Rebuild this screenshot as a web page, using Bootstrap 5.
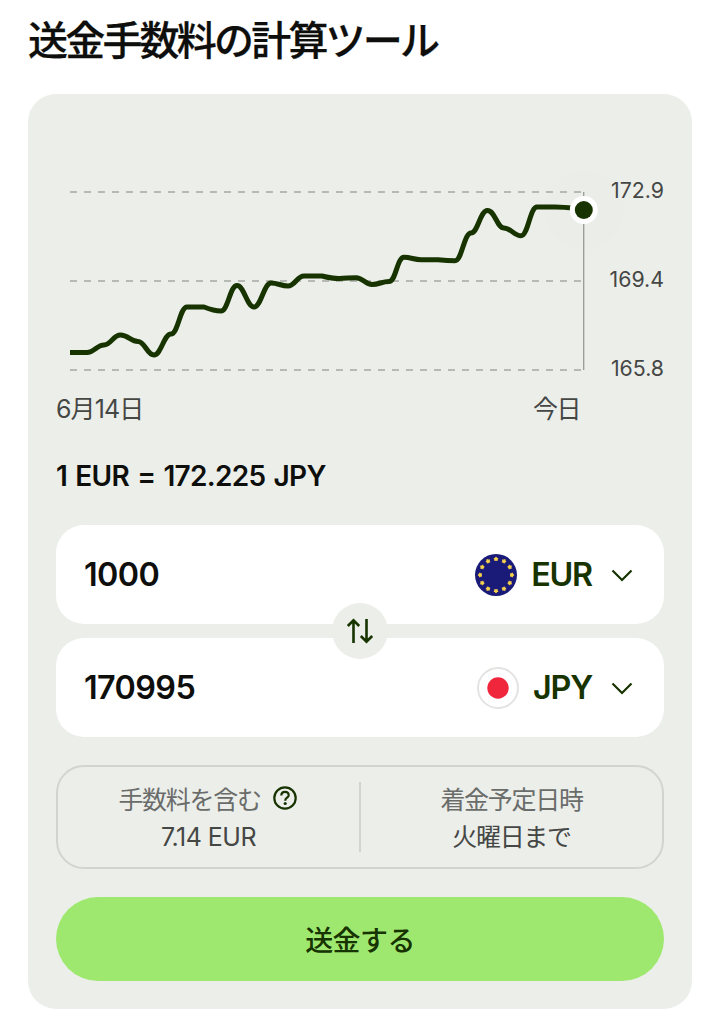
<!DOCTYPE html>
<html lang="ja">
<head>
<meta charset="utf-8">
<meta name="viewport" content="width=device-width, initial-scale=1">
<title>送金手数料の計算ツール</title>
<link href="https://cdn.jsdelivr.net/npm/bootstrap@5.3.0/dist/css/bootstrap.min.css" rel="stylesheet">
<style>
body{font-family:Inter,"Noto Sans CJK JP",sans-serif;color:#0e0f0c;background:#fff;padding:0 28px}
.page-title{font-size:40px;line-height:60px;height:94px;padding-top:11px;font-weight:500;letter-spacing:-2.8px;white-space:nowrap;-webkit-text-stroke:.25px #0e0f0c}
.calc{background:#eceeea;border-radius:28px;height:915px;padding:0 28px}
.chart{height:298px;margin:0 -28px}
.chart text{font-size:21.3px;fill:#454745}
.dates{font-size:25px;line-height:36px;height:36px;color:#454745;letter-spacing:-.9px;margin-top:-1px}
.dates span:last-child{margin-right:84px;letter-spacing:-1.5px}
.rate{font-size:28px;line-height:40px;margin-top:29px;font-weight:600;letter-spacing:-.7px;word-spacing:1.8px;white-space:nowrap}
.money{background:#fff;border-radius:28px;height:99px;padding:1px 31px 0 28px;font-size:32.3px;font-weight:600;letter-spacing:-.6px}
.code{color:#163300;font-weight:600;letter-spacing:-1.2px;margin:0 19px 0 14px}
.swap{width:56px;height:56px;background:#eceeea;left:50%;top:106px;transform:translate(-50%,-50%);border:0}
.facts{border:2px solid #d2d5cf;border-radius:28px;height:104px;margin-top:28px;font-size:25px;color:#454745}
.facts .cell{line-height:37px;letter-spacing:-1.3px;padding-top:3px;flex:1 1 0}
.facts .fee{letter-spacing:-.5px}
.facts .cap{color:#6a6c6a;letter-spacing:-1.3px}
.divider{width:2px;height:70px;background:#d2d5cf}
.send{background:#9fe870;color:#163300;border:0;height:84px;margin-top:28px;padding-top:10px;font-size:28px;font-weight:500;letter-spacing:-.6px}
.send:hover{background:#8fdc60;color:#163300}
</style>
</head>
<body>
<h1 class="page-title m-0">送金手数料の計算ツール</h1>
<main class="calc">
  <svg class="chart d-block" width="664" height="298" viewBox="28 94 664 298">
    <circle cx="584" cy="210" r="40" fill="#163300" fill-opacity=".004"/>
    <g stroke="#b7b9b5" stroke-width="2" stroke-dasharray="7 7">
      <path d="M70 192H584M70 281H584M70 370H584"/>
    </g>
    <path d="M583.700 192V370" stroke="#989b96" stroke-width="1.300"/>
    <path fill="none" stroke="#163300" stroke-width="5" stroke-linejoin="round" d="M70 352.5H87C94 352.5 97 345 104 345S113 335 120.500 335S131 341.500 138 341.500S147 355 154 355S164 334 171 334S180 307 187 307H204S214 311 221 311S230 285.500 237 285.500S247 307 254 307S264 283 271 283S281 286 288 286S297 276 304 276H322S332 278.500 339 278.500S349 277.700 356 277.700S365 284.500 372 284.500S382 281.500 389 281.500S397 257.300 404 257.300S414 259.700 421 259.700H438S448 260.700 455 260.700S464 233 471 233S480 210.500 487.500 210.500S497 228 504 228S514 235.800 521 235.800S530 207 537 207H555S575 207.500 584 210"/>
    <circle cx="583.8" cy="210" r="14" fill="#fff"/>
    <circle cx="583.8" cy="210" r="9" fill="#163300"/>
    <g text-anchor="end"><text x="664" y="198">172.9</text><text x="664" y="287">169.4</text><text x="664" y="376">165.8</text></g>
  </svg>
  <div class="dates d-flex justify-content-between"><span>6月14日</span><span>今日</span></div>
  <div class="rate">1 EUR = 172.225 JPY</div>
  <div class="position-relative d-grid" style="gap:14px;margin-top:29px">
    <div class="money d-flex align-items-center justify-content-between">
      <span>1000</span>
      <div class="d-flex align-items-center">
        <svg width="42" height="42" viewBox="-21 -21 42 42"><circle r="21" fill="#1a1a78"/><g fill="#f5d04c"><path id="s" d="M0-18.500L1.100-17.300L2.500-16.500L1.700-15.300L1.600-13.900L0-14.200L-1.600-13.900L-1.700-15.300L-2.500-16.500L-1.100-17.300Z"/><use href="#s" transform="rotate(30)"/><use href="#s" transform="rotate(60)"/><use href="#s" transform="rotate(90)"/><use href="#s" transform="rotate(120)"/><use href="#s" transform="rotate(150)"/><use href="#s" transform="rotate(180)"/><use href="#s" transform="rotate(210)"/><use href="#s" transform="rotate(240)"/><use href="#s" transform="rotate(270)"/><use href="#s" transform="rotate(300)"/><use href="#s" transform="rotate(330)"/></g></svg>
        <span class="code">EUR</span>
        <svg width="22" height="14" viewBox="0 0 22 14" fill="none" stroke="#163300" stroke-width="2.200"><path d="M1.500 2.500L11 12L20.500 2.500"/></svg>
      </div>
    </div>
    <div class="money d-flex align-items-center justify-content-between">
      <span>170995</span>
      <div class="d-flex align-items-center">
        <svg width="42" height="42" viewBox="-21 -21 42 42"><circle r="20" fill="#fff" stroke="#e3e4e2" stroke-width="2"/><circle r="10.700" fill="#f0263c"/></svg>
        <span class="code">JPY</span>
        <svg width="22" height="14" viewBox="0 0 22 14" fill="none" stroke="#163300" stroke-width="2.200"><path d="M1.500 2.500L11 12L20.500 2.500"/></svg>
      </div>
    </div>
    <button class="swap position-absolute rounded-circle d-flex align-items-center justify-content-center p-0" aria-label="入れ替え">
      <svg width="28" height="28" viewBox="0 0 28 28" fill="none" stroke="#163300" stroke-width="2.600"><path d="M7.500 26V3.500M1.800 9L7.500 3.300L13.200 9M20.500 2V24.500M14.800 19L20.500 24.700L26.200 19"/></svg>
    </button>
  </div>
  <div class="facts d-flex align-items-center">
    <div class="cell text-center">
      <div class="cap d-flex justify-content-center align-items-center">手数料を含む
        <svg style="margin:-4px 2px 0 12px" width="24" height="24" viewBox="0 0 24 24" fill="none" stroke="#163300" stroke-width="2.200"><circle cx="12" cy="12" r="10.700"/><path d="M8.300 9.600C8.300 7.200 9.900 5.800 12 5.800S15.700 7.200 15.700 9.200C15.700 11.800 12.200 11.600 12.200 14.700"/><circle cx="12.200" cy="17.500" r="1.600" fill="#163300" stroke="none"/></svg>
      </div>
      <div class="fee">7.14 EUR</div>
    </div>
    <div class="divider"></div>
    <div class="cell text-center"><div class="cap">着金予定日時</div><div>火曜日まで</div></div>
  </div>
  <button class="btn send w-100 rounded-pill">送金する</button>
</main>
<script src="https://cdn.jsdelivr.net/npm/bootstrap@5.3.0/dist/js/bootstrap.bundle.min.js"></script>
</body>
</html>
